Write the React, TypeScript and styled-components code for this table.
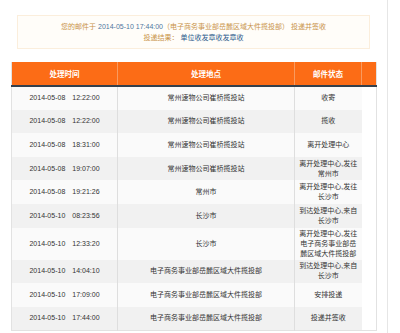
import React from "react";
import styled, { createGlobalStyle } from "styled-components";

const GlobalStyle = createGlobalStyle`
  body {
    margin: 0;
    background: #ffffff;
    font-family: "Liberation Sans", "Noto Sans CJK SC", sans-serif;
  }
`;

const Page = styled.div`
  width: 388px;
  height: 333px;
  padding: 15px 12px 0 11px;
  box-sizing: border-box;
  border-right: 1px solid #e6e6e6;
  overflow: hidden;
`;

const Notice = styled.div`
  margin: 0 5px 13px 6px;
  height: 34px;
  box-sizing: border-box;
  border: 1px solid #fbeedc;
  background: #fffdf9;
  display: flex;
  flex-direction: column;
  align-items: center;
  justify-content: center;
  font-size: 7px;
  line-height: 11px;
  color: #c9944a;
`;

const NoticeLine = styled.div`
  white-space: pre;
`;

const Accent = styled.span<{ $tone: "date" | "result" }>`
  color: ${(p) => (p.$tone === "date" ? "#4f77a0" : "#2b5a8c")};
`;

const Table = styled.table`
  width: 365px;
  border-collapse: collapse;
  table-layout: fixed;
  border: 1px solid #e2e2e2;
  border-top: none;
  font-size: 7px;
  color: #333333;
`;

const HeadRow = styled.tr`
  background: #fc6c16;
  height: 24px;
  border-bottom: 2px solid #34404c;
`;

const HeadCell = styled.th`
  color: #ffffff;
  font-size: 7.5px;
  font-weight: bold;
  text-align: center;
  padding: 0;
  border-left: 1px solid #f99a5e;

  &:first-child {
    border-left: none;
  }
`;

const Row = styled.tr<{ $tall?: boolean }>`
  height: ${(p) => (p.$tall ? "31px" : "23.6px")};
`;

const Cell = styled.td<{ $even: boolean }>`
  background: ${(p) => (p.$even ? "#f1f1f1" : "#fafafa")};
  text-align: center;
  padding: 1px 2px;
  line-height: 10px;
  border-left: 1px solid #dedede;

  &:first-child {
    border-left: none;
  }
`;

const Spacer = styled.td`
  background: #ffffff;
  padding: 0;
`;

const Time = styled.span`
  margin-left: 7px;
`;

type Track = { date: string; time: string; place: string; status: string[] };

const tracks: Track[] = [
  { date: "2014-05-08", time: "12:22:00", place: "常州速物公司崔桥揽投站", status: ["收寄"] },
  { date: "2014-05-08", time: "12:22:00", place: "常州速物公司崔桥揽投站", status: ["揽收"] },
  { date: "2014-05-08", time: "18:31:00", place: "常州速物公司崔桥揽投站", status: ["离开处理中心"] },
  { date: "2014-05-08", time: "19:07:00", place: "常州速物公司崔桥揽投站", status: ["离开处理中心,发往", "常州市"] },
  { date: "2014-05-08", time: "19:21:26", place: "常州市", status: ["离开处理中心,发往", "长沙市"] },
  { date: "2014-05-10", time: "08:23:56", place: "长沙市", status: ["到达处理中心,来自", "长沙市"] },
  { date: "2014-05-10", time: "12:33:20", place: "长沙市", status: ["离开处理中心,发往", "电子商务事业部岳", "麓区域大件揽投部"] },
  { date: "2014-05-10", time: "14:04:10", place: "电子商务事业部岳麓区域大件揽投部", status: ["到达处理中心,来自", "长沙市"] },
  { date: "2014-05-10", time: "17:09:00", place: "电子商务事业部岳麓区域大件揽投部", status: ["安排投递"] },
  { date: "2014-05-10", time: "17:44:00", place: "电子商务事业部岳麓区域大件揽投部", status: ["投递并签收"] },
];

export default function App() {
  return (
    <>
      <GlobalStyle />
      <Page>
        <Notice>
          <NoticeLine>
            您的邮件于 <Accent $tone="date">2014-05-10 17:44:00</Accent>（电子商务事业部岳麓区域大件揽投部） 投递并签收
          </NoticeLine>
          <NoticeLine>
            投递结果： <Accent $tone="result">单位收发章收发章收</Accent>
          </NoticeLine>
        </Notice>
        <Table>
          <colgroup>
            <col style={{ width: 106 }} />
            <col style={{ width: 177 }} />
            <col style={{ width: 67 }} />
            <col style={{ width: 15 }} />
          </colgroup>
          <thead>
            <HeadRow>
              <HeadCell>处理时间</HeadCell>
              <HeadCell>处理地点</HeadCell>
              <HeadCell>邮件状态</HeadCell>
              <HeadCell />
            </HeadRow>
          </thead>
          <tbody>
            {tracks.map((t, i) => (
              <Row key={i} $tall={t.status.length > 2}>
                <Cell $even={i % 2 === 1}>
                  {t.date}
                  <Time>{t.time}</Time>
                </Cell>
                <Cell $even={i % 2 === 1}>{t.place}</Cell>
                <Cell $even={i % 2 === 1}>
                  {t.status.map((s, j) => (
                    <React.Fragment key={j}>
                      {j > 0 && <br />}
                      {s}
                    </React.Fragment>
                  ))}
                </Cell>
                <Spacer />
              </Row>
            ))}
          </tbody>
        </Table>
      </Page>
    </>
  );
}
